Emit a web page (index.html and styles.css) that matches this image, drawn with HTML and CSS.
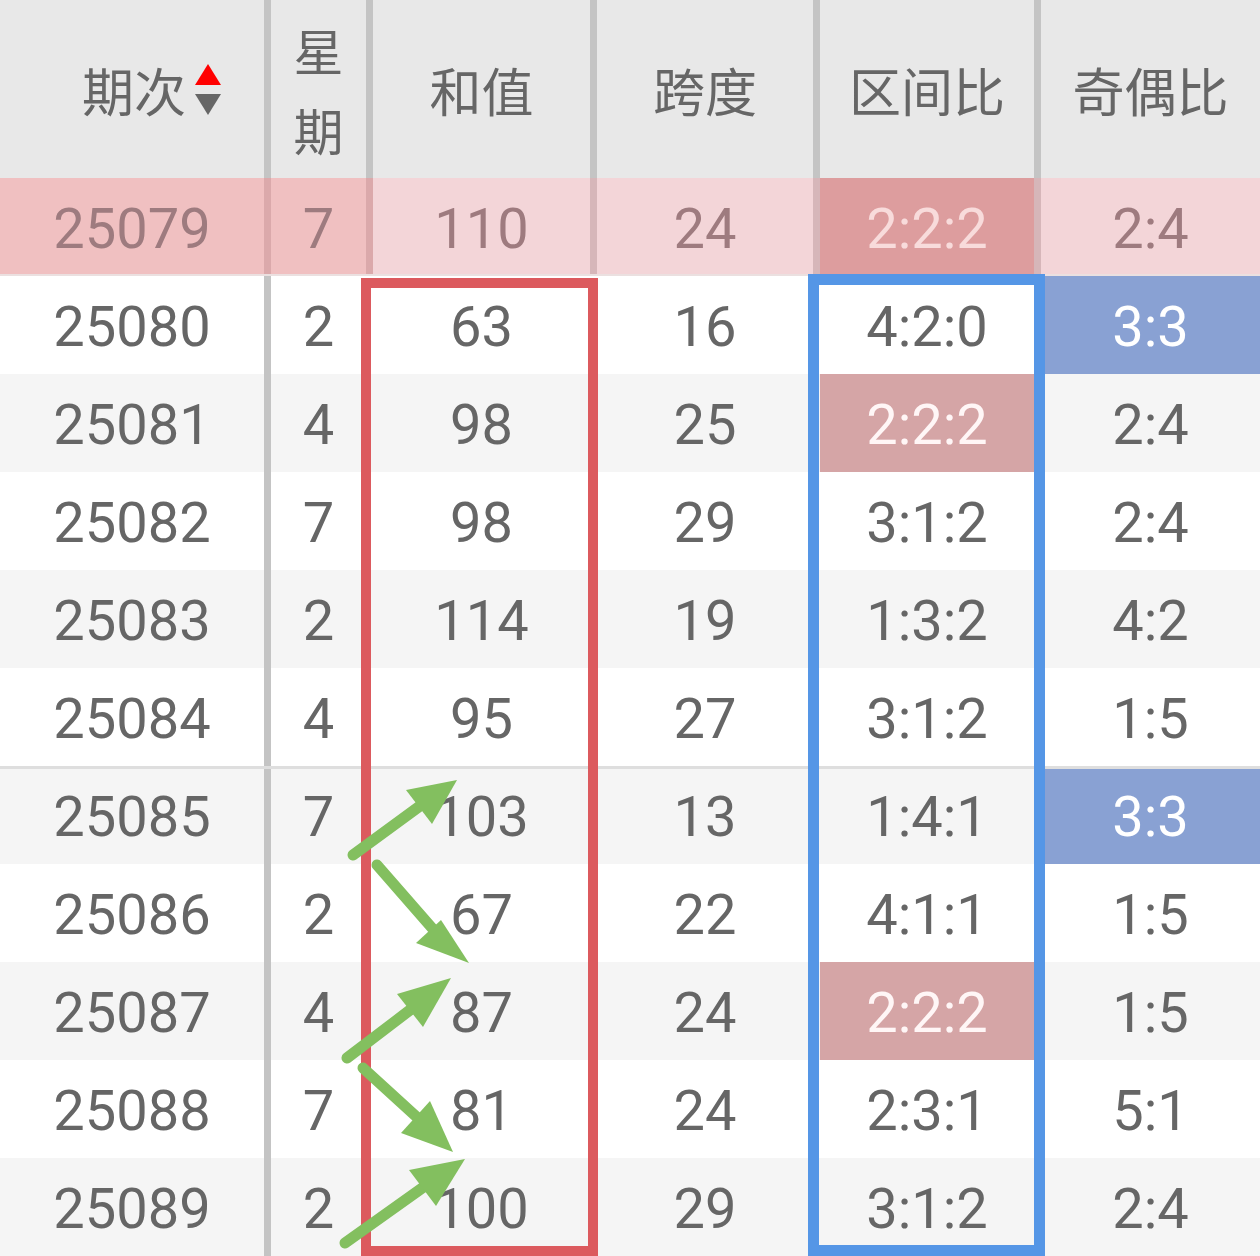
FILE: index.html
```html
<!DOCTYPE html>
<html lang="zh">
<head>
<meta charset="utf-8">
<title>和值走势</title>
<link rel="stylesheet" href="styles.css">
</head>
<body>
<div class="page">
  <div class="table">
    <div class="row head">
      <div class="cell"><span class="sort-label">期次<span class="sort"><i class="up"></i><i class="down"></i></span></span></div>
      <div class="cell two-line">星<br>期</div>
      <div class="cell">和值</div>
      <div class="cell">跨度</div>
      <div class="cell">区间比</div>
      <div class="cell">奇偶比</div>
    </div>
    <div class="row hl">
      <div class="cell dark">25079</div>
      <div class="cell dark">7</div>
      <div class="cell">110</div>
      <div class="cell">24</div>
      <div class="cell mark">2:2:2</div>
      <div class="cell">2:4</div>
    </div>
    <div class="row">
      <div class="cell">25080</div><div class="cell">2</div><div class="cell">63</div><div class="cell">16</div><div class="cell">4:2:0</div><div class="cell odd">3:3</div>
    </div>
    <div class="row alt">
      <div class="cell">25081</div><div class="cell">4</div><div class="cell">98</div><div class="cell">25</div><div class="cell same">2:2:2</div><div class="cell">2:4</div>
    </div>
    <div class="row">
      <div class="cell">25082</div><div class="cell">7</div><div class="cell">98</div><div class="cell">29</div><div class="cell">3:1:2</div><div class="cell">2:4</div>
    </div>
    <div class="row alt">
      <div class="cell">25083</div><div class="cell">2</div><div class="cell">114</div><div class="cell">19</div><div class="cell">1:3:2</div><div class="cell">4:2</div>
    </div>
    <div class="row">
      <div class="cell">25084</div><div class="cell">4</div><div class="cell">95</div><div class="cell">27</div><div class="cell">3:1:2</div><div class="cell">1:5</div>
    </div>
    <div class="row alt sep">
      <div class="cell">25085</div><div class="cell">7</div><div class="cell">103</div><div class="cell">13</div><div class="cell">1:4:1</div><div class="cell odd">3:3</div>
    </div>
    <div class="row">
      <div class="cell">25086</div><div class="cell">2</div><div class="cell">67</div><div class="cell">22</div><div class="cell">4:1:1</div><div class="cell">1:5</div>
    </div>
    <div class="row alt">
      <div class="cell">25087</div><div class="cell">4</div><div class="cell">87</div><div class="cell">24</div><div class="cell same">2:2:2</div><div class="cell">1:5</div>
    </div>
    <div class="row">
      <div class="cell">25088</div><div class="cell">7</div><div class="cell">81</div><div class="cell">24</div><div class="cell">2:3:1</div><div class="cell">5:1</div>
    </div>
    <div class="row alt">
      <div class="cell">25089</div><div class="cell">2</div><div class="cell">100</div><div class="cell">29</div><div class="cell">3:1:2</div><div class="cell">2:4</div>
    </div>
  </div>

  <div class="frame frame-red"></div>
  <div class="frame frame-blue"></div>

  <svg class="arrows" width="1260" height="1256" viewBox="0 0 1260 1256">
    <g stroke="#83bf5f" stroke-width="11" stroke-linecap="round" fill="none">
      <line x1="353" y1="855" x2="424" y2="803"/>
      <line x1="377" y1="865" x2="432" y2="928"/>
      <line x1="347" y1="1058" x2="414" y2="1007"/>
      <line x1="363" y1="1068" x2="420" y2="1120"/>
      <line x1="345" y1="1243" x2="425" y2="1186"/>
    </g>
    <g fill="#83bf5f">
      <polygon points="457,780 406,790 432,824"/>
      <polygon points="469,963 416,943 441,920"/>
      <polygon points="451,978 397,994 423,1027"/>
      <polygon points="453,1152 401,1133 430,1101"/>
      <polygon points="465,1159 409,1170 436,1206"/>
    </g>
  </svg>
</div>
</body>
</html>
```

FILE: styles.css
```css
html, body {
  margin: 0;
  padding: 0;
  overflow: hidden;
  background: #ffffff;
}

.page {
  position: relative;
  width: 1260px;
  height: 1256px;
  font-family: Roboto, "Noto Sans CJK SC", sans-serif;
  color: #666666;
}

.table {
  display: flex;
  flex-direction: column;
}

.row {
  display: grid;
  grid-template-columns: 271px 102px 224px 223px 221px 219px;
  height: 98px;
  box-sizing: border-box;
  background: #ffffff;
}

.row.alt {
  background: #f5f5f5;
}

.row.sep {
  border-top: 3px solid #dedede;
}

.cell {
  display: flex;
  align-items: center;
  justify-content: center;
  box-sizing: border-box;
  border-right: 7px solid transparent;
  font-size: 56px;
  line-height: 1;
  white-space: nowrap;
  padding-top: 4px;
}

.row.sep .cell {
  padding-top: 1px;
}

.row .cell:first-child {
  border-right-color: #c4c4c4;
}

.row .cell:last-child {
  border-right: none;
}

/* header */
.row.head {
  height: 178px;
  background: #e8e8e8;
}

.row.head .cell {
  font-family: "Noto Sans CJK SC", sans-serif;
  font-size: 52px;
  border-right-color: #c4c4c4;
  padding-top: 2px;
}

.row.head .cell:last-child {
  border-right: none;
}

.two-line {
  text-align: center;
  line-height: 80px;
}

.row.head .cell.two-line {
  font-size: 50px;
  padding-top: 0;
}

.sort-label {
  position: relative;
  padding-left: 4px;
}

.sort {
  position: absolute;
  left: calc(100% + 9px);
  top: 50%;
  margin-top: -26px;
  display: flex;
  flex-direction: column;
  gap: 9px;
}

.sort i {
  display: block;
  width: 0;
  height: 0;
  border-left: 13px solid transparent;
  border-right: 13px solid transparent;
}

.sort .up {
  border-bottom: 21px solid #ff0000;
}

.sort .down {
  border-top: 21px solid #666666;
}

/* highlighted first row */
.row.hl {
  background: #f3d5d8;
  color: #9e7b7f;
  border-bottom: 2px solid #ebe0e0;
}

.row.hl .cell {
  border-right-color: #d6b6b9;
  padding-top: 6px;
}

.row.hl .cell:last-child {
  border-right: none;
}

.row.hl .cell.dark {
  background: #f0c0c1;
  border-right-color: #dba9ab;
}

.row.hl .cell.mark {
  background: #dd9d9e;
  color: #f8dbdb;
}

/* special cells */
.cell.same {
  background: #d5a5a6;
  color: #fff6f6;
}

.cell.odd {
  background: #89a1d3;
  color: #ffffff;
}

/* overlay frames */
.frame {
  position: absolute;
  box-sizing: border-box;
  pointer-events: none;
}

.frame-red {
  left: 361px;
  top: 278px;
  width: 237px;
  height: 978px;
  border: 10px solid #dc5a5e;
}

.frame-blue {
  left: 808px;
  top: 274px;
  width: 237px;
  height: 982px;
  border: 11px solid #5596e6;
}

.arrows {
  position: absolute;
  left: 0;
  top: 0;
  pointer-events: none;
}
```
